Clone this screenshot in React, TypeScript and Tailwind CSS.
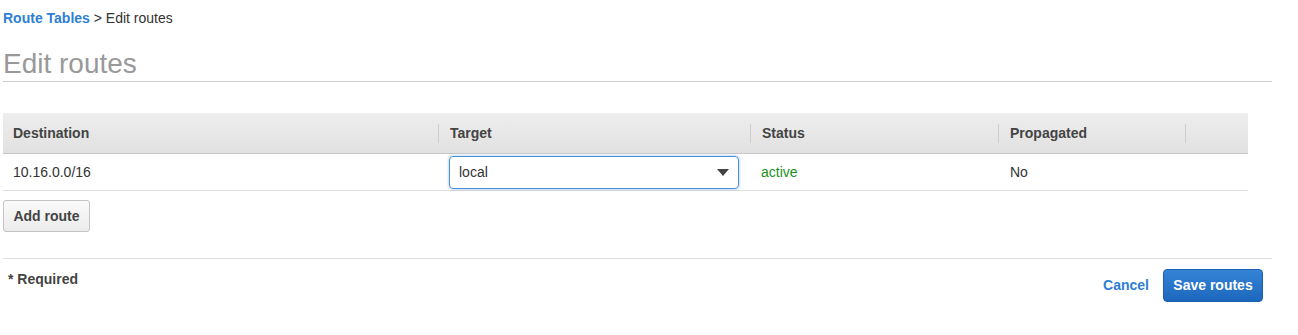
const columns = [
  { label: "Destination", width: "w-[435px]", first: true },
  { label: "Target", width: "w-[312px]" },
  { label: "Status", width: "w-[248px]" },
  { label: "Propagated", width: "w-[187px]" },
  { label: "", width: "w-[63px]" },
];

function HeaderCell({ label, width, first }: { label: string; width: string; first?: boolean }) {
  return (
    <div className={`${width} flex h-full items-center`}>
      {first ? (
        <span className="pl-[10px]">{label}</span>
      ) : (
        <>
          <span className="h-[19px] w-px bg-[#cdcdcd]" />
          <span className="pl-[11px]">{label}</span>
        </>
      )}
    </div>
  );
}

export default function App() {
  return (
    <div
      className="min-h-[335px] bg-white pl-[3px] text-[14px] text-[#444]"
      style={{ fontFamily: '"Liberation Sans", Arial, Helvetica, sans-serif' }}
    >
      <div className="w-[1269px]">
        {/* breadcrumb */}
        <div className="mt-[8px] h-[20px] leading-[20px]">
          <span className="font-bold text-[#2e7fd4]">Route Tables</span>
          <span className="text-[#333]"> &gt; Edit routes</span>
        </div>

        <h1 className="mt-[19px] h-[35px] border-b border-[#cccccc] text-[28px] leading-[34px] font-normal text-[#999]">
          Edit routes
        </h1>

        {/* routes table */}
        <div className="mt-[31px] w-[1245px]">
          <div className="flex h-[41px] border-b border-[#c6c6c6] bg-gradient-to-b from-[#eeeeee] to-[#e1e1e1] font-bold text-[#444]">
            {columns.map((c) => (
              <HeaderCell key={c.label + c.width} {...c} />
            ))}
          </div>
          <div className="flex h-[37px] items-center border-b border-[#dddddd] pt-[1px] text-[#333]">
            <div className="w-[435px] pl-[10px]">10.16.0.0/16</div>
            <div className="w-[312px] pl-[11px]">
              <div className="flex h-[33px] w-[290px] items-center justify-between rounded-[4px] border border-[#4a8fdb] pr-[9px] pl-[9px] shadow-[0_0_3px_rgba(74,143,219,0.6)]">
                <span>local</span>
                <svg width="12" height="7" viewBox="0 0 12 7">
                  <polygon points="0,0 12,0 6,7" fill="#444" />
                </svg>
              </div>
            </div>
            <div className="w-[248px] pl-[11px] text-[#1b9125]">active</div>
            <div className="w-[187px] pl-[12px]">No</div>
            <div className="w-[63px]" />
          </div>
        </div>

        <button className="mt-[9px] h-[32px] w-[87px] rounded-[3px] border border-[#c4c4c4] bg-gradient-to-b from-[#fafafa] to-[#ebebeb] font-bold text-[#444]">
          Add route
        </button>

        {/* footer */}
        <div className="mt-[26px] flex justify-between border-t border-[#dddddd] pt-[10px]">
          <div className="pl-[5px] leading-[20px] font-bold">* Required</div>
          <div className="flex items-center gap-[14px] pr-[9px]">
            <span className="font-bold text-[#2e7fd4]">Cancel</span>
            <button className="h-[33px] w-[100px] rounded-[4px] border border-[#1a5fae] bg-gradient-to-b from-[#3584d6] to-[#1b67bd] font-bold text-white">
              Save routes
            </button>
          </div>
        </div>
      </div>
    </div>
  );
}
